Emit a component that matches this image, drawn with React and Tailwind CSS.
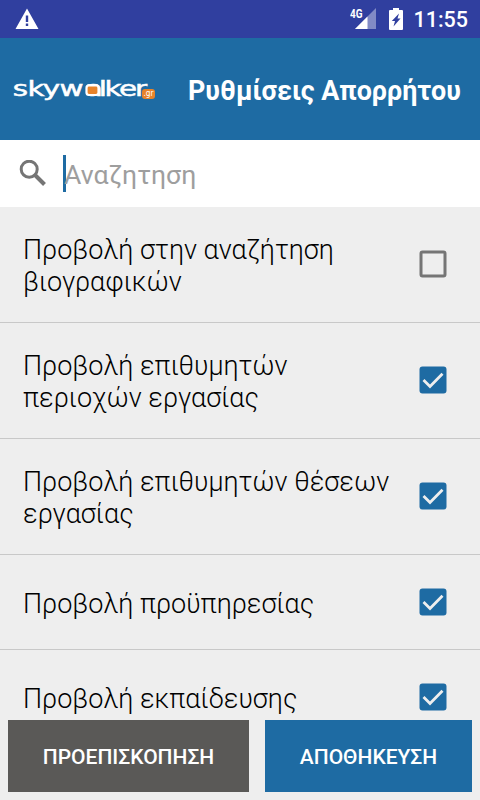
import { useState } from 'react';

const SETTINGS = [
	{ id: 'search', label: 'Προβολή στην αναζήτηση βιογραφικών', checked: false },
	{ id: 'areas', label: 'Προβολή επιθυμητών περιοχών εργασίας', checked: true },
	{ id: 'positions', label: 'Προβολή επιθυμητών θέσεων εργασίας', checked: true },
	{ id: 'experience', label: 'Προβολή προϋπηρεσίας', checked: true },
	{ id: 'education', label: 'Προβολή εκπαίδευσης', checked: true },
];

function StatusBar() {
	return (
		<div className="h-[38px] shrink-0 bg-[#303f9f] flex items-center pl-[15px] pr-3 text-white">
			<svg className="w-6 h-[22px]" viewBox="0 0 24 22">
				<path fill="currentColor" fillRule="evenodd" d="M12 .5 23.5 21H.5ZM10.800 7.500v6.500h2.400V7.500Zm0 8.100V18h2.400v-2.400Z" />
			</svg>
			<div className="ml-auto flex items-center">
				<svg className="w-[28px] h-[22px]" viewBox="0 0 28 22">
					<path fill="currentColor" fillOpacity=".4" d="M26 0v21H5Z" />
					<path fill="#303f9f" d="M0 0h14v11H0z" />
					<path fill="currentColor" d="M17.500 8.500V21H5Z" />
					<text x="0" y="9.500" fill="currentColor" fontFamily="Roboto" fontSize="12" fontWeight="700" textLength="12.500" lengthAdjust="spacingAndGlyphs">4G</text>
				</svg>
				<svg className="w-[14px] h-[22px] ml-[11px] -mt-px" viewBox="0 0 14 22">
					<path fill="currentColor" d="M4 0h6v2h3q1 0 1 1v18q0 1-1 1H1q-1 0-1-1V3q0-1 1-1h3Z" />
					<path fill="#303f9f" d="M10 5.500 8.500 10.500h3L4.500 18.500 6 13H2.800Z" />
				</svg>
				<span className="ml-[10px] text-[21.5px] leading-none pt-[2px] font-medium">11:55</span>
			</div>
		</div>
	);
}

function Logo() {
	return (
		<svg className="w-[144px] h-8 shrink-0" viewBox="0 0 144 32">
			<text transform="scale(1.4 1)" x="-0.2 10.400 21.300 33.200 51.300 61.300 65.400 75.700 87.200" y="23" fill="#fff" stroke="#fff" strokeWidth=".5" fontFamily="DejaVu Sans" fontSize="21">skywalker</text>
			<rect x="73.500" y="12.400" width="12" height="9.600" rx="2.500" fill="#e8832a" stroke="#fff" strokeWidth="2.200" />
			<rect x="129" y="16" width="13" height="10" rx="3" fill="#e8832a" />
			<text x="130.500" y="23" fill="#fff" fontFamily="DejaVu Sans" fontSize="8" textLength="10" lengthAdjust="spacingAndGlyphs">.gr</text>
		</svg>
	);
}

function Checkbox({ checked, onChange }) {
	return (
		<button role="checkbox" aria-checked={checked} onClick={onChange} className="w-7 h-7 shrink-0 -mt-1">
			<svg className="w-7 h-7" viewBox="0 0 28 28">
				{checked ? (
					<>
						<rect x=".5" y=".5" width="27" height="27" rx="3" fill="#1e6ba3" />
						<path d="M4.500 14 11 20.500 23.500 7.800" fill="none" stroke="#eee" strokeWidth="2.800" />
					</>
				) : (
					<rect x="2" y="2" width="24" height="24" rx="1.500" fill="none" stroke="#757575" strokeWidth="3" />
				)}
			</svg>
		</button>
	);
}

export default function App() {
	const [settings, setSettings] = useState(SETTINGS);

	function toggle(id) {
		setSettings(prev => prev.map(s => (s.id === id ? { ...s, checked: !s.checked } : s)));
	}

	return (
		<div className="w-[480px] h-[800px] overflow-hidden flex flex-col bg-[#eeeeee] font-['Roboto',sans-serif]">
			<StatusBar />
			<header className="h-[102px] shrink-0 bg-[#1e6ba3] flex items-center pl-[13px]">
				<Logo />
				<h1 className="ml-[31px] pt-[3px] text-[26.9px] leading-8 font-bold text-white whitespace-nowrap">Ρυθμίσεις Απορρήτου</h1>
			</header>
			<div className="h-[67px] shrink-0 bg-white flex items-center pl-[19px]">
				<svg className="w-7 h-7 text-[#757575]" viewBox="0 0 28 28">
					<circle cx="10.200" cy="9.200" r="8" fill="none" stroke="currentColor" strokeWidth="3" />
					<path d="m15.500 14.500 10 10" stroke="currentColor" strokeWidth="4" />
				</svg>
				<div className="ml-4 w-[3px] h-[37px] bg-[#1e6ba3]" />
				<span className="-ml-[2px] pt-[3px] text-[26.6px] leading-8 text-[#9e9e9e]">Αναζητηση</span>
			</div>
			<ul className="flex-1 min-h-0 overflow-hidden">
				{settings.map(s => (
					<li key={s.id} className="flex items-center justify-between pl-[23px] pr-[33px] pt-[27px] pb-[24px] min-h-[95px] border-b border-[#c8c8c8]">
						<div className="w-[380px] text-[27px] leading-8 font-light text-black">{s.label}</div>
						<Checkbox checked={s.checked} onChange={() => toggle(s.id)} />
					</li>
				))}
			</ul>
			<footer className="h-20 shrink-0 flex gap-4 px-2 pb-2 text-white text-[21px] font-medium">
				<button className="w-[241px] pt-[3px] bg-[#5a5957]">ΠΡΟΕΠΙΣΚΟΠΗΣΗ</button>
				<button className="flex-1 pt-[3px] bg-[#1e6ba3]">ΑΠΟΘΗΚΕΥΣΗ</button>
			</footer>
		</div>
	);
}
